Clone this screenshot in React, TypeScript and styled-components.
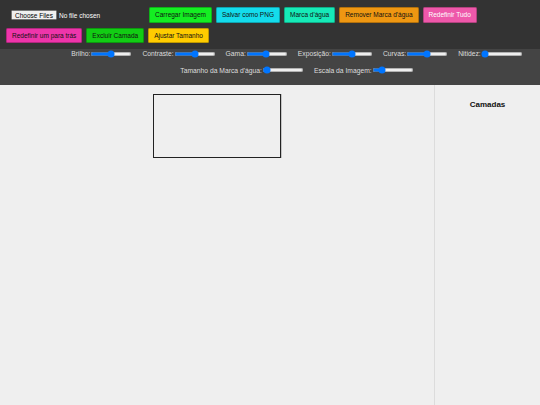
import React, { useState } from 'react';
import styled, { createGlobalStyle } from 'styled-components';

const GlobalStyle = createGlobalStyle`
    html, body {
        margin: 0;
        padding: 0;
        background: #efefef;
        font-family: "Liberation Sans", Arial, sans-serif;
    }
`;

const Page = styled.div`
    zoom: 0.5;
    width: 1080px;
    height: 810px;
    display: flex;
    flex-direction: column;
    overflow: hidden;
`;

const Toolbar = styled.div`
    display: flex;
    flex-wrap: wrap;
    align-items: center;
    padding: 9.5px 8px 6px 8px;
    background: #333333;
`;

const FileInput = styled.input`
    width: 268px;
    margin: 4px 4px 4px 14px;
    font-family: "Liberation Sans", Arial, sans-serif;
    font-size: 13px;
    color: #ffffff;
`;

const ToolButton = styled.button<{ bg: string; light?: boolean }>`
    margin: 5px 4px;
    padding: 6px 10px;
    font-family: "Liberation Sans", Arial, sans-serif;
    font-size: 13px;
    line-height: 15px;
    color: ${props => props.light ? '#ffffff' : '#111111'};
    background: ${props => props.bg};
    border: 1px solid rgba(0, 0, 0, 0.25);
    border-radius: 3px;
    cursor: pointer;
`;

const Controls = styled.div`
    display: flex;
    flex-wrap: wrap;
    justify-content: center;
    padding: 0 0 6px 108px;
    background: #444444;
`;

const Control = styled.label`
    display: flex;
    align-items: center;
    height: 20px;
    margin: 0 10px 13px 10px;
    font-size: 13.5px;
    color: #dddddd;
`;

const Range = styled.input`
    width: 84px;
    margin: 0;
`;

const Main = styled.div`
    flex: 1;
    display: flex;
    min-height: 0;
`;

const CanvasArea = styled.div`
    flex: 1;
    display: flex;
    justify-content: center;
    align-items: flex-start;
    padding-top: 18px;
`;

const Canvas = styled.canvas`
    width: 252px;
    height: 124px;
    border: 2px solid #222222;
    box-shadow: 1px 0 0 #999999;
`;

const Sidebar = styled.aside`
    width: 210px;
    border-left: 2px solid #dcdcdc;
    padding-top: 30px;
`;

const SidebarTitle = styled.h3`
    margin: 0;
    text-align: center;
    font-size: 16px;
    line-height: 18px;
    color: #111111;
`;

type SliderType = {
    label: string
    min: number
    max: number
    step: number
    value: number
}

const sliders: SliderType[] = [
    { label: 'Brilho:', min: 0, max: 200, step: 1, value: 100 },
    { label: 'Contraste:', min: 0, max: 200, step: 1, value: 100 },
    { label: 'Gama:', min: 0.1, max: 2, step: 0.1, value: 1 },
    { label: 'Exposição:', min: -100, max: 100, step: 1, value: 0 },
    { label: 'Curvas:', min: 0, max: 200, step: 1, value: 100 },
    { label: 'Nitidez:', min: 0, max: 10, step: 1, value: 0 },
    { label: "Tamanho da Marca d'água:", min: 10, max: 500, step: 1, value: 30 },
    { label: 'Escala da Imagem:', min: 0.1, max: 5, step: 0.1, value: 1 },
]

const App: React.FC = () => {

    const [values, setValues] = useState(sliders.map(s => s.value))

    const setValue = (i: number, v: number) => {
        setValues(prev => prev.map((old, j) => j === i ? v : old))
    }

    return (
        <Page>
            <GlobalStyle />
            <Toolbar>
                <FileInput type="file" accept="image/*" multiple />
                <ToolButton bg="#14ee22">Carregar Imagem</ToolButton>
                <ToolButton bg="#14dcec">Salvar como PNG</ToolButton>
                <ToolButton bg="#16eab8">Marca d'água</ToolButton>
                <ToolButton bg="#ee9712">Remover Marca d'água</ToolButton>
                <ToolButton bg="#ee58aa" light>Redefinir Tudo</ToolButton>
                <ToolButton bg="#ee35aa">Redefinir um para trás</ToolButton>
                <ToolButton bg="#12cc14">Excluir Camada</ToolButton>
                <ToolButton bg="#ffcc00">Ajustar Tamanho</ToolButton>
            </Toolbar>
            <Controls>
                {sliders.map((s, i) => (
                    <Control key={s.label}>
                        {s.label}
                        <Range
                            type="range"
                            min={s.min}
                            max={s.max}
                            step={s.step}
                            value={values[i]}
                            onChange={evt => setValue(i, Number(evt.target.value))}
                        />
                    </Control>
                ))}
            </Controls>
            <Main>
                <CanvasArea>
                    <Canvas width={252} height={124} />
                </CanvasArea>
                <Sidebar>
                    <SidebarTitle>Camadas</SidebarTitle>
                </Sidebar>
            </Main>
        </Page>
    );
};

export default App;
